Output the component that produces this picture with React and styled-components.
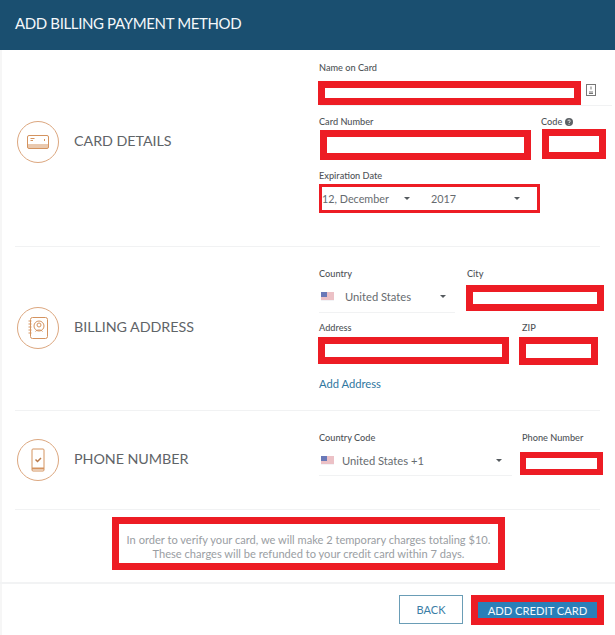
import React from 'react';
import styled, { createGlobalStyle } from 'styled-components';

const GlobalStyle = createGlobalStyle`
  html, body {
    margin: 0;
    padding: 0;
    background: #fff;
    overflow: hidden;
    font-family: Lato, "Open Sans", sans-serif;
  }
  * { box-sizing: border-box; }
`;

const Page = styled.div`
  width: 615px;
  height: 635px;
  border-left: 2px solid #f6f6f6;
  display: flex;
  flex-direction: column;
  position: relative;
`;

const Header = styled.div`
  height: 50px;
  margin-left: -2px;
  background: #1a4f70;
  color: #f4f8fa;
  font-size: 15px;
  line-height: 47px;
  padding-left: 15px;
  letter-spacing: -0.37px;
`;

const Section = styled.section`
  display: flex;
  height: ${(p) => p.$height}px;
  margin: 0 15px 0 13px;
  padding-top: ${(p) => p.$top}px;
  border-bottom: 1px solid #f1f2f3;
`;

const Aside = styled.div`
  width: 304px;
  flex: none;
  display: flex;
  align-items: center;
  gap: 15px;
  padding-left: 2px;
  height: ${(p) => p.$height}px;
`;

const Circle = styled.div`
  width: 42px;
  height: 42px;
  flex: none;
  border-radius: 50%;
  border: 1px solid #dca77f;
  display: flex;
  align-items: center;
  justify-content: center;
`;

const SectionTitle = styled.div`
  font-size: 14.3px;
  color: #5f6468;
  padding-bottom: 4px;
  letter-spacing: -0.05px;
`;

const Form = styled.div`
  width: 290px;
  flex: none;
`;

const Row = styled.div`
  display: flex;
  height: 54px;
  position: relative;
`;

const Field = styled.div`
  width: ${(p) => p.$w}px;
  margin-left: ${(p) => p.$ml || 0}px;
  flex: none;
`;

const Label = styled.div`
  font-size: 9.2px;
  font-weight: 500;
  height: 12px;
  line-height: ${(p) => p.$lh || 14}px;
  color: #4f5458;
  margin-left: ${(p) => p.$ml || 0}px;
  white-space: nowrap;
  display: flex;
  align-items: flex-start;
  gap: 3px;
`;

// the red blocks painted over the inputs in the picture
const Masked = styled.div`
  height: ${(p) => p.$h}px;
  margin-top: ${(p) => p.$mt || 3}px;
  border: ${(p) => p.$b || 7}px solid #ed1c24;
  background: #fff;
`;

const NameLine = styled.div`
  position: absolute;
  left: 1px;
  right: -3px;
  top: 44px;
  border-bottom: 1px solid #f1f2f3;
`;

const IdIcon = styled.svg`
  position: absolute;
  left: 267px;
  top: 23px;
`;

const DateBox = styled(Masked)`
  display: flex;
  align-items: center;
  font-size: 10.8px;
  color: #666b6f;
`;

const DatePart = styled.span`
  width: ${(p) => p.$w}px;
  margin-left: ${(p) => p.$ml || 0}px;
  flex: none;
`;

const Caret = styled.span`
  width: 0;
  height: 0;
  flex: none;
  margin-left: ${(p) => p.$ml || 0}px;
  border-left: 3.5px solid transparent;
  border-right: 3.5px solid transparent;
  border-top: 3.5px solid #555a5e;
`;

const HelpMark = styled.svg`
  margin-top: 3px;
`;

const SelectBox = styled.div`
  height: 29px;
  margin-top: ${(p) => p.$mt || 3}px;
  display: flex;
  align-items: center;
  padding: 0 0 ${(p) => p.$pb}px 2px;
  font-size: 11.2px;
  color: #666b6f;
  border-bottom: 1px solid #f1f2f3;
`;

const SelectText = styled.span`
  margin-left: ${(p) => p.$ml}px;
  width: ${(p) => p.$w}px;
  flex: none;
  white-space: nowrap;
`;

const LinkText = styled.a`
  display: block;
  font-size: 11.2px;
  line-height: 14px;
  color: #30779f;
  margin-top: 1px;
`;

const NoteWrap = styled.div`
  height: 72px;
  padding-top: 7px;
  display: flex;
  justify-content: center;
`;

const Note = styled.div`
  width: 393px;
  height: 53px;
  border: 7px solid #ed1c24;
  font-size: 11.1px;
  line-height: 14px;
  color: #9a9ea3;
  text-align: center;
  padding-top: 9px;
  white-space: nowrap;
`;

const Footer = styled.div`
  flex: 1;
  margin-left: -2px;
  border-top: 2px solid #f2f3f4;
  display: flex;
  justify-content: flex-end;
  gap: 8px;
  padding: 11px 11px 0 0;
`;

const BackButton = styled.button`
  width: 64px;
  height: 29px;
  padding: 0;
  background: #fff;
  border: 1px solid #6a9db6;
  color: #3b7ea6;
  font: 11px Lato, sans-serif;
`;

const AddButton = styled.button`
  width: 133px;
  height: 30px;
  padding: 0;
  border: 7px solid #ed1c24;
  background: #2a7fb8;
  color: #f4f8fb;
  font: 11.2px Lato, sans-serif;
`;

const CardIcon = () => (
  <svg width="24" height="16" viewBox="0 0 24 16" fill="none" stroke="#d4935f">
    <rect x="1.5" y="1.5" width="21" height="13" rx="1.5" />
    <path d="M1.5 11h21M1.5 13h21" />
    <path d="M4.5 4.5h4M4.5 6.5h2.5M18.5 5v2" />
  </svg>
);

const BookIcon = () => (
  <svg width="22" height="24" viewBox="0 0 22 24" fill="none" stroke="#d4935f">
    <rect x="3.5" y="1.5" width="17" height="21" rx="2" />
    <circle cx="12" cy="10" r="5" />
    <circle cx="12" cy="9" r="2" />
    <path d="M8.5 15.5c1-2 6-2 7 0M1.5 5h3M1.5 8h3M1.5 11h3M1.5 14h3M1.5 17h3" />
  </svg>
);

const PhoneIcon = () => (
  <svg width="14" height="24" viewBox="0 0 14 24" fill="none" stroke="#d4935f">
    <rect x="1" y="1" width="12" height="22" rx="1" />
    <path d="M1 20.5h12" strokeWidth="2" />
    <path d="M4.5 11.5l2 2 3.500-3.500" strokeWidth="1.5" stroke="#b9794a" />
  </svg>
);

const FlagIcon = () => (
  <svg width="13" height="9" viewBox="0 0 13 9">
    <rect width="13" height="9" fill="#f3f3f6" />
    <path d="M0 1h13M0 3h13M0 5h13M0 7h13" stroke="#e58f96" strokeWidth="1" />
    <rect width="6" height="5" fill="#6a79b8" />
  </svg>
);

const HelpIcon = () => (
  <HelpMark width="8" height="8" viewBox="0 0 8 8">
    <circle cx="4" cy="4" r="4" fill="#5d6266" />
    <path d="M2.8 3.100c0-1.500 2.500-1.500 2.500 0C5.300 4 4 4 4 5" stroke="#fff" strokeWidth="0.8" fill="none" />
    <circle cx="4" cy="6.200" r="0.500" fill="#fff" />
  </HelpMark>
);

const App = () => (
  <Page>
    <GlobalStyle />
    <Header>ADD BILLING PAYMENT METHOD</Header>

    <Section $height={197} $top={11}>
      <Aside $height={162}>
        <Circle><CardIcon /></Circle>
        <SectionTitle>CARD DETAILS</SectionTitle>
      </Aside>
      <Form>
        <Row>
          <Field $w={263} $ml={-1}>
            <Label $ml={1}>Name on Card</Label>
            <Masked $h={24} $mt={8} />
          </Field>
          <NameLine />
          <IdIcon width="10" height="12" viewBox="0 0 10 12" fill="none" stroke="#777">
            <rect x="0.500" y="0.500" width="9" height="11" />
            <path d="M5 2.500v3M3 8h4M3 9.500h4" />
          </IdIcon>
        </Row>
        <Row>
          <Field $w={211} $ml={1}>
            <Label $ml={-1}>Card Number</Label>
            <Masked $h={30} />
          </Field>
          <Field $w={64} $ml={11}>
            <Label $ml={-1}>Code <HelpIcon /></Label>
            <Masked $h={30} $mt={2} />
          </Field>
        </Row>
        <Row>
          <Field $w={221}>
            <Label>Expiration Date</Label>
            <DateBox $h={29} $b={3}>
              <DatePart $w={82}>12, December</DatePart>
              <Caret />
              <DatePart $w={40} $ml={21}>2017</DatePart>
              <Caret $ml={43} />
            </DateBox>
          </Field>
        </Row>
      </Form>
    </Section>

    <Section $height={164} $top={21}>
      <Aside $height={120}>
        <Circle><BookIcon /></Circle>
        <SectionTitle>BILLING ADDRESS</SectionTitle>
      </Aside>
      <Form>
        <Row>
          <Field $w={136}>
            <Label $lh={12}>Country</Label>
            <SelectBox $mt={4} $pb={3}>
              <FlagIcon />
              <SelectText $ml={11} $w={95}>United States</SelectText>
              <Caret />
            </SelectBox>
          </Field>
          <Field $w={138} $ml={11}>
            <Label $ml={1} $lh={12}>City</Label>
            <Masked $h={26} $mt={5} />
          </Field>
        </Row>
        <Row>
          <Field $w={191} $ml={-1}>
            <Label $ml={1} $lh={12}>Address</Label>
            <Masked $h={27} />
          </Field>
          <Field $w={79} $ml={10}>
            <Label $ml={3} $lh={12}>ZIP</Label>
            <Masked $h={28} />
          </Field>
        </Row>
        <LinkText>Add Address</LinkText>
      </Form>
    </Section>

    <Section $height={99} $top={20}>
      <Aside $height={58}>
        <Circle><PhoneIcon /></Circle>
        <SectionTitle>PHONE NUMBER</SectionTitle>
      </Aside>
      <Form>
        <Row>
          <Field $w={193}>
            <Label>Country Code</Label>
            <SelectBox $mt={4} $pb={1}>
              <FlagIcon />
              <SelectText $ml={8} $w={154}>United States +1</SelectText>
              <Caret />
            </SelectBox>
          </Field>
          <Field $w={83} $ml={8}>
            <Label $ml={2}>Phone Number</Label>
            <Masked $h={23} $mt={9} $b={6} />
          </Field>
        </Row>
      </Form>
    </Section>

    <NoteWrap>
      <Note>
        In order to verify your card, we will make 2 temporary charges totaling $10.
        <br />
        These charges will be refunded to your credit card within 7 days.
      </Note>
    </NoteWrap>

    <Footer>
      <BackButton>BACK</BackButton>
      <AddButton>ADD CREDIT CARD</AddButton>
    </Footer>
  </Page>
);

export default App;
